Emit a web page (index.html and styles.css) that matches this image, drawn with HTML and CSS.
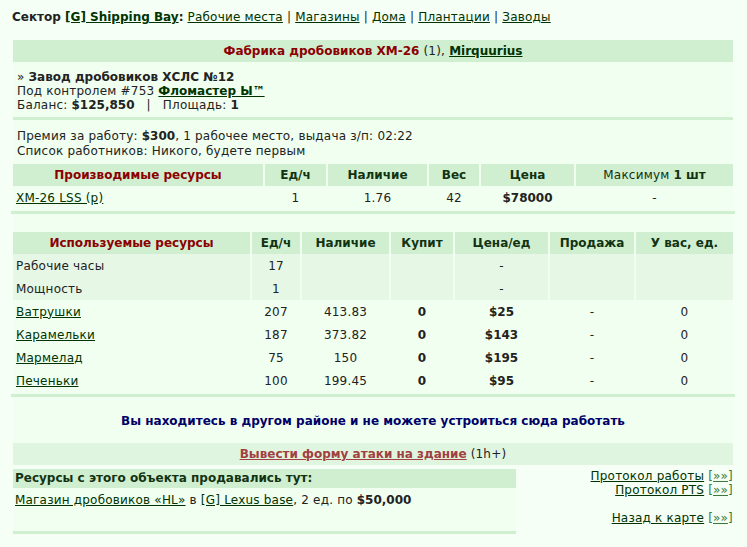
FILE: index.html
```html
<!DOCTYPE html>
<html>
    <head>
        <title>Фабрика дробовиков ХМ-26</title>
        <meta charset="UTF-8">
        <link rel="stylesheet" href="styles.css">
    </head>
    <body>
        <div class="topNav">
            <b>Сектор <a href="#">[G] Shipping Bay</a>:</b>
            <a href="#">Рабочие места</a> | <a href="#">Магазины</a> | <a href="#">Дома</a> | <a href="#">Плантации</a> | <a href="#">Заводы</a>
        </div>

        <div class="panel">
            <div class="titleBar">
                <b class="red">Фабрика дробовиков ХМ-26</b> (1), <b><a href="#">Mirquurius</a></b>
            </div>
            <div class="info">
                » <b>Завод дробовиков ХСЛС №12</b><br>
                Под контролем #753 <b><a href="#">Фломастер Ы™</a></b><br>
                Баланс: <b>$125,850</b> &nbsp; | &nbsp; Площадь: <b>1</b>
            </div>
            <div class="workInfo">
                Премия за работу: <b>$300</b>, 1 рабочее место, выдача з/п: 02:22<br>
                Список работников: Никого, будете первым
            </div>

            <table class="resTable">
                <tr>
                    <th class="red" style="width:250px">Производимые ресурсы</th>
                    <th style="width:61px">Ед/ч</th>
                    <th style="width:99px">Наличие</th>
                    <th style="width:50px">Вес</th>
                    <th style="width:93px">Цена</th>
                    <th class="normal">Максимум <b>1 шт</b></th>
                </tr>
                <tr>
                    <td class="left"><a href="#">XM-26 LSS (p)</a></td>
                    <td>1</td>
                    <td>1.76</td>
                    <td>42</td>
                    <td><b>$78000</b></td>
                    <td>-</td>
                </tr>
            </table>

            <table class="resTable second">
                <tr>
                    <th class="red" style="width:237px">Используемые ресурсы</th>
                    <th style="width:48px">Ед/ч</th>
                    <th style="width:87px">Наличие</th>
                    <th style="width:62px">Купит</th>
                    <th style="width:93px">Цена/ед</th>
                    <th style="width:84px">Продажа</th>
                    <th>У вас, ед.</th>
                </tr>
                <tr class="shade">
                    <td class="left">Рабочие часы</td>
                    <td>17</td><td></td><td></td><td>-</td><td></td><td></td>
                </tr>
                <tr class="shade">
                    <td class="left">Мощность</td>
                    <td>1</td><td></td><td></td><td>-</td><td></td><td></td>
                </tr>
                <tr>
                    <td class="left"><a href="#">Ватрушки</a></td>
                    <td>207</td><td>413.83</td><td><b>0</b></td><td><b>$25</b></td><td>-</td><td>0</td>
                </tr>
                <tr>
                    <td class="left"><a href="#">Карамельки</a></td>
                    <td>187</td><td>373.82</td><td><b>0</b></td><td><b>$143</b></td><td>-</td><td>0</td>
                </tr>
                <tr>
                    <td class="left"><a href="#">Мармелад</a></td>
                    <td>75</td><td>150</td><td><b>0</b></td><td><b>$195</b></td><td>-</td><td>0</td>
                </tr>
                <tr>
                    <td class="left"><a href="#">Печеньки</a></td>
                    <td>100</td><td>199.45</td><td><b>0</b></td><td><b>$95</b></td><td>-</td><td>0</td>
                </tr>
            </table>

            <div class="notice">Вы находитесь в другом районе и не можете устроиться сюда работать</div>

            <div class="attackBar">
                <b><a class="attack" href="#">Вывести форму атаки на здание</a></b> (1h+)
            </div>

            <div class="bottomRow">
                <div class="soldBlock">
                    <div class="soldHead">Ресурсы с этого объекта продавались тут:</div>
                    <div class="soldRow">
                        <a href="#">Магазин дробовиков «HL»</a> в <a href="#">[G] Lexus base</a>, 2 ед. по <b>$50,000</b>
                    </div>
                </div>
                <div class="sideLinks">
                    <a href="#">Протокол работы</a> <a class="more" href="#">[»»]</a><br>
                    <a href="#">Протокол PTS</a> <a class="more" href="#">[»»]</a><br>
                    <br>
                    <a href="#">Назад к карте</a> <a class="more" href="#">[»»]</a>
                </div>
            </div>
        </div>
    </body>
</html>
```

FILE: styles.css
```css
body{
    margin: 0;
    background-color: #f5fff5;
    font-family: "DejaVu Sans", Verdana, sans-serif;
    font-size: 12px;
    line-height: 14px;
    letter-spacing: 0.2px;
    color: #222;
}

b, th{
    letter-spacing: 0;
}

a{
    color: #003300;
}

.red{
    color: #8b0000;
}

.topNav{
    padding: 10px 12px 0 12px;
    height: 30px;
    color: #222;
}

.panel{
    width: 720px;
    margin-left: 13px;
    background-color: #f0fff0;
}

.titleBar{
    background-color: #d0eed0;
    height: 22px;
    line-height: 22px;
    text-align: center;
}

.info{
    padding: 8px 4px 6px 4px;
    border-bottom: 3px solid #d0eed0;
    height: 41px;
}

.workInfo{
    padding: 9px 4px 5px 4px;
    line-height: 15px;
}

.resTable{
    border-collapse: separate;
    border-spacing: 2px 0;
    margin: 0 -2px;
    width: 724px;
    table-layout: fixed;
    border-bottom: 3px solid #d0eed0;
    padding-bottom: 2px;
}

.resTable.second{
    margin-top: 18px;
}

.resTable th{
    background-color: #d0eed0;
    height: 22px;
    padding: 0;
    color: #113311;
}

.resTable th.red{
    color: #8b0000;
}

.resTable th.normal{
    font-weight: normal;
    letter-spacing: 0.2px;
}

.resTable td{
    height: 23px;
    padding: 0;
    text-align: center;
}

.resTable td.left{
    text-align: left;
    padding-left: 3px;
}

.resTable tr.shade td{
    background-color: #e6f7e6;
}

.notice{
    padding: 17px 0 15px 0;
    text-align: center;
    font-weight: bold;
    letter-spacing: 0;
    color: #000066;
}

.attackBar{
    background-color: #e0f5e0;
    height: 22px;
    line-height: 22px;
    text-align: center;
}

.attack{
    color: #a04040;
}

.bottomRow{
    display: flex;
    padding-top: 4px;
    background-color: #f5fff5;
}

.soldBlock{
    width: 503px;
    height: 62px;
    background-color: #f0fff0;
    border-bottom: 3px solid #d0eed0;
}

.soldHead{
    background-color: #d0eed0;
    height: 19px;
    line-height: 19px;
    padding-left: 2px;
    font-weight: bold;
    letter-spacing: 0;
    color: #113311;
}

.soldRow{
    padding: 5px 2px;
}

.sideLinks{
    flex: 1;
    text-align: right;
    padding-top: 0;
}

.more{
    color: #3a7a3a;
}
```
